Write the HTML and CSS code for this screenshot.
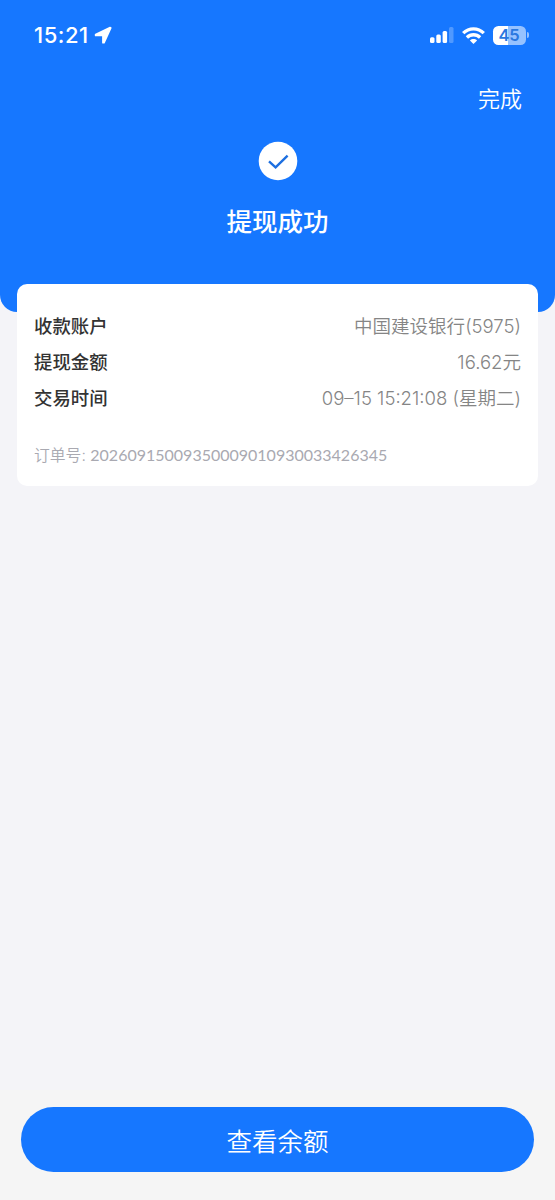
FILE: index.html
```html
<!DOCTYPE html>
<html lang="zh-CN">
<head>
<meta charset="utf-8">
<meta name="viewport" content="width=device-width, initial-scale=1">
<title>提现成功</title>
<link rel="stylesheet" href="styles.css">
</head>
<body>
<div class="screen">
  <header class="hero">
    <div class="status">
      <div class="clock">
        <span class="time">15:21</span>
        <svg class="locate" width="18" height="18" viewBox="0 0 18 18"><path d="M16.200 1.600 1.700 8.500v.9h7.300v7.300h1L16.700 2z" fill="#fff" stroke="#fff" stroke-width="1.800" stroke-linejoin="round"/></svg>
      </div>
      <div class="indicators">
        <svg width="25" height="16" viewBox="0 0 25 16" fill="#fff"><rect x="1" y="10.300" width="4.500" height="5.700" rx="1.500"/><rect x="7.300" y="7.500" width="4.500" height="8.500" rx="1.500"/><rect x="13.600" y="4" width="4.500" height="12" rx="1.500"/><rect x="20" y="0" width="4.500" height="16" rx="1.500" opacity=".25"/></svg>
        <svg width="23" height="17" viewBox="0 0 23 17" fill="none" stroke="#fff" stroke-width="3.300"><path d="M1.200 6.200C7 .4 16 .4 21.800 6.200"/><path d="M4.900 10.500c3.800-3.700 9.400-3.700 13.200 0"/><path d="M11.500 17 7.900 13.500c2.100-1.900 5.100-1.900 7.200 0z" fill="#fff" stroke="none"/></svg>
        <div class="battery"><span class="cell">45</span><span class="nub"></span></div>
      </div>
    </div>
    <div class="nav"><span class="done">完成</span></div>
    <div class="result">
      <svg width="40" height="40" viewBox="0 0 40 40"><circle cx="20" cy="20" r="19.300" fill="#fff"/><path d="m11 20.400 6.600 5.900L29.600 14.700" fill="none" stroke="#1d6fe0" stroke-width="2.400"/></svg>
      <h1 class="title">提现成功</h1>
    </div>
  </header>
  <main class="card">
    <div class="row"><span class="label">收款账户</span><span class="value account">中国建设银行(5975)</span></div>
    <div class="row"><span class="label">提现金额</span><span class="value amount">16.62元</span></div>
    <div class="row"><span class="label">交易时间</span><span class="value date">09–15 15:21:08 (星期二)</span></div>
    <div class="order">订单号: <span class="number">20260915009350009010930033426345</span></div>
  </main>
  <footer class="footer"><button class="action" type="button">查看余额</button></footer>
</div>
</body>
</html>
```
FILE: styles.css
```css
* { box-sizing: border-box; }
body { margin: 0; font-family: Inter, "Noto Sans CJK SC", sans-serif; background: #f4f4f8; }
.screen { width: 555px; height: 1200px; display: flex; flex-direction: column; background: #f4f4f8; }
.hero { height: 312px; flex: none; background: #1677ff; color: #fff; border-radius: 0 0 17px 17px; }
.status { height: 70px; padding: 0 26px 0 34px; display: flex; justify-content: space-between; align-items: center; }
.clock { display: flex; align-items: center; gap: 5px; }
.time { font-size: 22px; font-weight: 550; line-height: 28px; letter-spacing: .5px; }
.indicators { display: flex; align-items: center; gap: 8px; }
.battery { display: flex; align-items: center; gap: 1px; }
.cell { width: 33px; height: 19px; border-radius: 5.500px; background: linear-gradient(90deg, #fff 45%, #96c2ff 45%); color: #2a78e0; font-size: 16.500px; font-weight: 600; line-height: 19px; letter-spacing: -.3px; padding-right: 1px; text-align: center; }
.nub { width: 2px; height: 6px; border-radius: 0 2px 2px 0; background: #96c2ff; }
.nav { height: 71px; padding: 13px 33px 0; text-align: right; }
.done { font-size: 22px; font-weight: 350; line-height: 32px; display: inline-block; }
.result { display: flex; flex-direction: column; align-items: center; }
.title { margin: 22px 0 0; font-size: 25.500px; font-weight: 500; line-height: 38px; }
.card { flex: none; width: 521px; height: 202px; margin: -28px 0 0 17px; padding: 23px 17px 0 17px; border-radius: 10px; background: #fff; }
.row { height: 36px; display: flex; justify-content: space-between; align-items: center; }
.label { color: #333; font-size: 18.400px; font-weight: 500; }
.value { color: #858585; font-size: 18.550px; font-weight: 350; padding-bottom: 2px; }
.order { margin-top: 28px; color: #a9a9b1; font-size: 15.800px; font-weight: 350; line-height: 24px; white-space: nowrap; }
.number { font-family: Lato, sans-serif; font-size: 16px; font-weight: 400; }
.footer { height: 110px; margin-top: auto; padding: 17px 21px 0; background: #f5f5f5; }
.action { display: block; width: 513px; height: 65px; padding: 4px 0 0; border: 0; border-radius: 33px; background: #1677ff; color: #fff; font: 350 25.500px/38px Inter, "Noto Sans CJK SC", sans-serif; }
```
